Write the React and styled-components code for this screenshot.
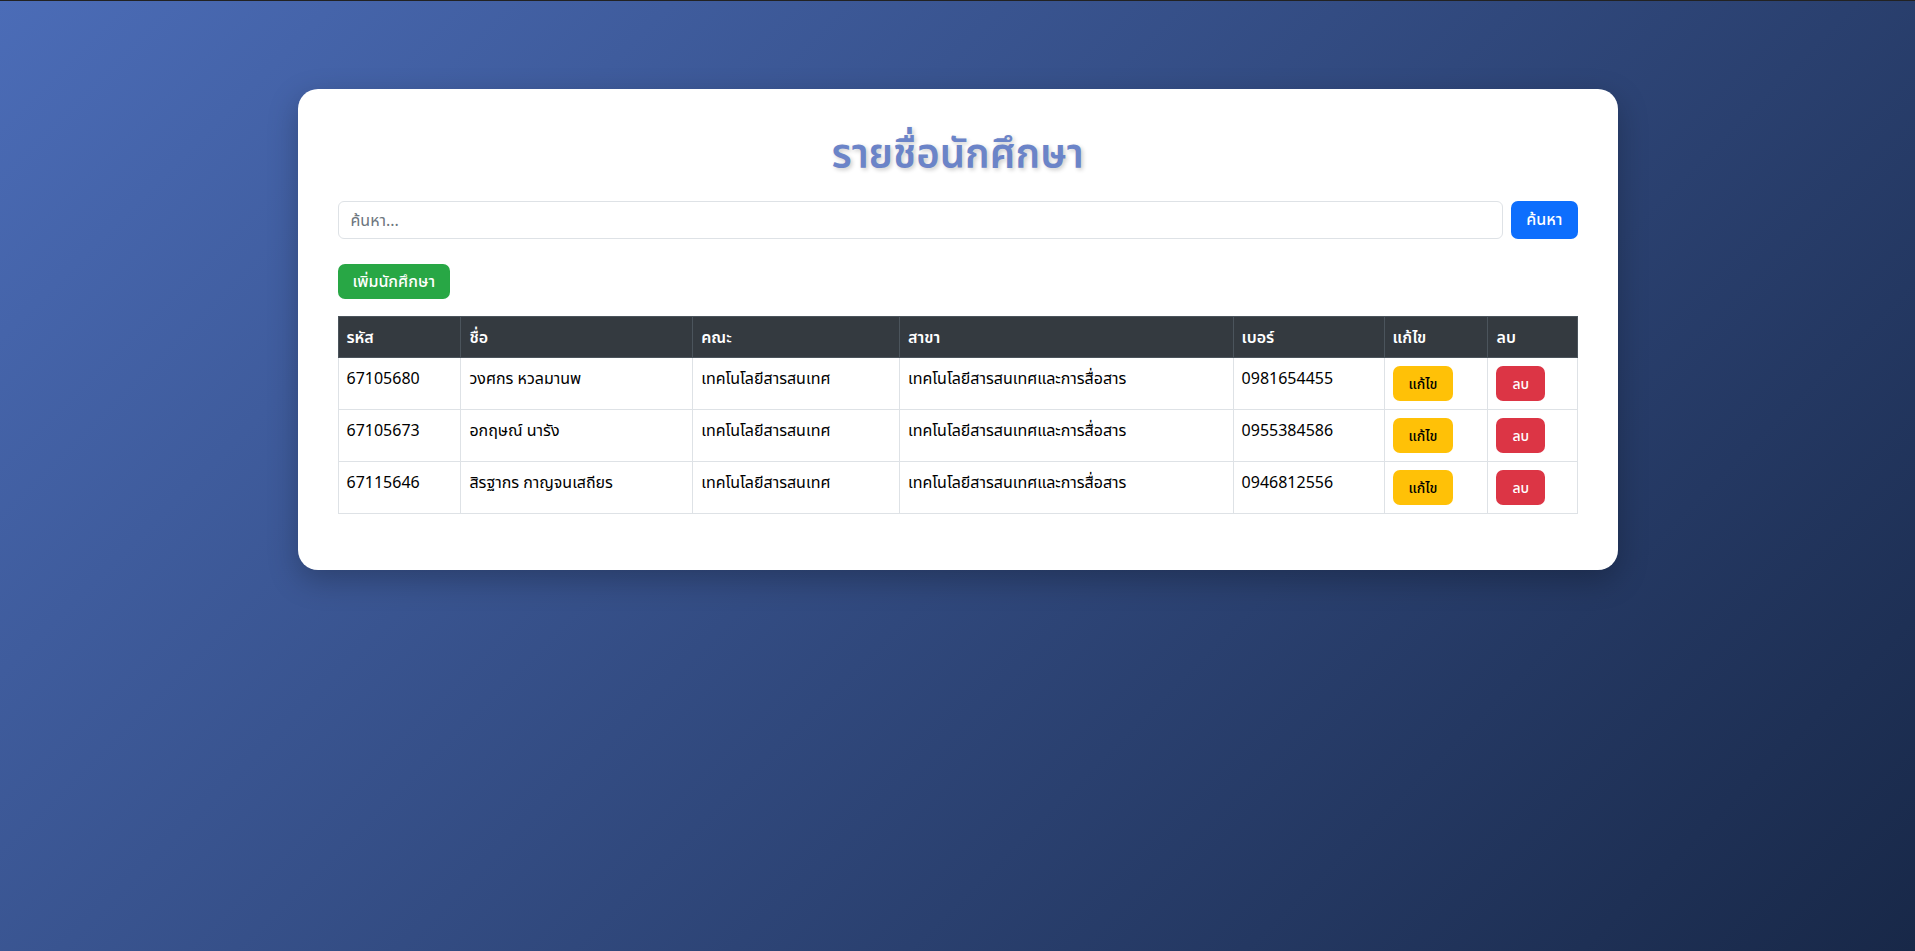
import React, { useState } from "react";
import styled, { createGlobalStyle } from "styled-components";

const GlobalStyle = createGlobalStyle`
  * {
    box-sizing: border-box;
  }

  body {
    margin: 0;
    min-height: 100vh;
    border-top: 1px solid #222;
    background: linear-gradient(135deg, #4b6cb7 0%, #182848 100%);
    background-attachment: fixed;
    font-family: "Noto Sans", "Noto Sans Thai", "Loma", "Garuda", "DejaVu Sans", sans-serif;
    color: #212529;
  }
`;

const Page = styled.div`
  padding: 88px 0 40px;
`;

const Card = styled.div`
  width: 1320px;
  margin: 0 auto;
  background: #fff;
  border-radius: 20px;
  padding: 40px 40px 56px;
  box-shadow: 0 10px 30px rgba(0, 0, 0, 0.25);
`;

const Title = styled.h1`
  margin: 0 0 24px;
  text-align: center;
  font-size: 40px;
  line-height: 48px;
  font-weight: 600;
  color: #6b84c8;
  text-shadow: 2px 2px 4px rgba(0, 0, 0, 0.2);
`;

const SearchRow = styled.form`
  display: flex;
  gap: 8px;
  margin-bottom: 25px;
`;

const SearchInput = styled.input`
  flex: 1;
  height: 38px;
  padding: 6px 12px;
  font: inherit;
  font-size: 16px;
  color: #212529;
  border: 1px solid #dee2e6;
  border-radius: 6px;

  &::placeholder {
    color: #6c757d;
  }

  &:focus {
    outline: 0;
  }
`;

const tones = {
  primary: { bg: "#0d6efd", fg: "#fff" },
  success: { bg: "#28a745", fg: "#fff" },
  warning: { bg: "#ffc107", fg: "#000" },
  danger: { bg: "#dc3545", fg: "#fff" },
};

const Button = styled.button`
  display: inline-flex;
  align-items: center;
  justify-content: center;
  min-height: 35px;
  padding: 0 ${(p) => (p.$small ? "16px" : "15px")};
  border: 0;
  border-radius: 7px;
  font: inherit;
  font-size: ${(p) => (p.$small ? "14px" : "16px")};
  font-weight: 500;
  background: ${(p) => tones[p.$tone].bg};
  color: ${(p) => tones[p.$tone].fg};
  cursor: pointer;
`;

const Toolbar = styled.div`
  display: flex;
  margin-bottom: 17px;
`;

const Table = styled.table`
  width: 100%;
  border-collapse: collapse;
  font-size: 16px;
  line-height: 24px;
`;

const Th = styled.th`
  background: #343a40;
  color: #fff;
  text-align: left;
  font-weight: 600;
  padding: 8px;
  border: 1px solid #4b545c;
  width: ${(p) => p.$w}px;
`;

const Td = styled.td`
  padding: 8px;
  border: 1px solid #dee2e6;
  vertical-align: top;
  color: #000;
`;

const columns = [
  ["รหัส", 123],
  ["ชื่อ", 232],
  ["คณะ", 207],
  ["สาขา", 334],
  ["เบอร์", 151],
  ["แก้ไข", 104],
  ["ลบ", 89],
];

const students = [
  {
    id: "67105680",
    name: "วงศกร หวลมานพ",
    faculty: "เทคโนโลยีสารสนเทศ",
    major: "เทคโนโลยีสารสนเทศและการสื่อสาร",
    phone: "0981654455",
  },
  {
    id: "67105673",
    name: "อกฤษณ์ นารัง",
    faculty: "เทคโนโลยีสารสนเทศ",
    major: "เทคโนโลยีสารสนเทศและการสื่อสาร",
    phone: "0955384586",
  },
  {
    id: "67115646",
    name: "สิรฐากร กาญจนเสถียร",
    faculty: "เทคโนโลยีสารสนเทศ",
    major: "เทคโนโลยีสารสนเทศและการสื่อสาร",
    phone: "0946812556",
  },
];

export default function App() {
  const [query, setQuery] = useState("");

  return (
    <>
      <GlobalStyle />
      <Page>
        <Card>
          <Title>รายชื่อนักศึกษา</Title>
          <SearchRow onSubmit={(e) => e.preventDefault()}>
            <SearchInput
              placeholder="ค้นหา..."
              value={query}
              onChange={(e) => setQuery(e.target.value)}
            />
            <Button type="submit" $tone="primary">
              ค้นหา
            </Button>
          </SearchRow>
          <Toolbar>
            <Button $tone="success">เพิ่มนักศึกษา</Button>
          </Toolbar>
          <Table>
            <thead>
              <tr>
                {columns.map(([label, w]) => (
                  <Th key={label} $w={w}>
                    {label}
                  </Th>
                ))}
              </tr>
            </thead>
            <tbody>
              {students.map((s) => (
                <tr key={s.id}>
                  <Td>{s.id}</Td>
                  <Td>{s.name}</Td>
                  <Td>{s.faculty}</Td>
                  <Td>{s.major}</Td>
                  <Td>{s.phone}</Td>
                  <Td>
                    <Button $tone="warning" $small>
                      แก้ไข
                    </Button>
                  </Td>
                  <Td>
                    <Button $tone="danger" $small>
                      ลบ
                    </Button>
                  </Td>
                </tr>
              ))}
            </tbody>
          </Table>
        </Card>
      </Page>
    </>
  );
}
